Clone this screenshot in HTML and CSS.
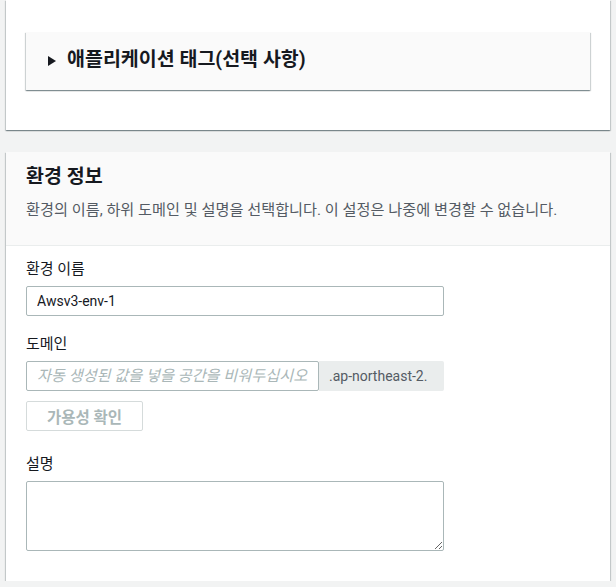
FILE: index.html
```html
<!DOCTYPE html>
<html lang="ko">
<head>
<meta charset="utf-8">
<title>환경 정보</title>
<link rel="stylesheet" href="styles.css">
</head>
<body>
<div class="page">
  <section class="card card-tags">
    <div class="expander">
      <svg class="caret" width="8" height="10" viewBox="0 0 8 10" aria-hidden="true"><polygon points="0,0 8,5 0,10" fill="#16191f"/></svg>
      <h3 class="expander-title">애플리케이션 태그(선택 사항)</h3>
    </div>
  </section>

  <section class="card">
    <header class="card-header">
      <h2 class="card-title">환경 정보</h2>
      <p class="card-desc">환경의 이름, 하위 도메인 및 설명을 선택합니다. 이 설정은 나중에 변경할 수 없습니다.</p>
    </header>
    <div class="card-body">
      <div class="field">
        <label class="field-label" for="env-name">환경 이름</label>
        <input class="text-input" id="env-name" type="text" value="Awsv3-env-1">
      </div>
      <div class="field">
        <label class="field-label" for="domain">도메인</label>
        <div class="input-group">
          <input class="text-input group-input" id="domain" type="text" placeholder="자동 생성된 값을 넣을 공간을 비워두십시오">
          <span class="suffix">.ap-northeast-2.</span>
        </div>
        <button class="btn" type="button" disabled>가용성 확인</button>
      </div>
      <div class="field field-desc">
        <label class="field-label" for="desc">설명</label>
        <textarea class="textarea" id="desc"></textarea>
      </div>
    </div>
  </section>
</div>
</body>
</html>
```

FILE: styles.css
```css
html, body {
  margin: 0;
  padding: 0;
  background: #f2f3f3;
}

body {
  font-family: "Roboto", "Noto Sans CJK KR", sans-serif;
  font-size: 15px;
  line-height: 22px;
  color: #16191f;
}

.page {
  padding: 0 6px;
}

.card {
  background: #ffffff;
  box-shadow: 0 1px 1px 0 rgba(0, 28, 36, 0.3),
              1px 1px 1px 0 rgba(0, 28, 36, 0.15),
              -1px 1px 1px 0 rgba(0, 28, 36, 0.15);
}

.card-tags {
  padding: 32px 20px 40px;
  margin-bottom: 22px;
}

.expander {
  display: flex;
  align-items: center;
  gap: 11px;
  background: #fafafa;
  padding: 17px 22px 19px;
  box-shadow: 0 1px 1px 0 rgba(0, 28, 36, 0.3),
              1px 1px 1px 0 rgba(0, 28, 36, 0.15),
              -1px 1px 1px 0 rgba(0, 28, 36, 0.15);
}

.caret {
  flex: none;
  display: block;
  margin-top: 2px;
}

.expander-title {
  margin: 0;
  font-size: 19.5px;
  line-height: 22px;
  font-weight: 700;
  color: #16191f;
}

.card-header {
  background: #fafafa;
  padding: 14px 20px 24px;
  border-bottom: 1px solid #eaeded;
}

.card-title {
  margin: 0;
  font-size: 19.5px;
  line-height: 22px;
  font-weight: 700;
  color: #16191f;
}

.card-desc {
  margin: 11px 0 0;
  font-size: 15.2px;
  line-height: 22px;
  color: #545b64;
}

.card-body {
  padding: 12px 20px 30px;
}

.field + .field {
  margin-top: 17px;
}

.field.field-desc {
  margin-top: 22px;
}

.field-label {
  display: block;
  margin-bottom: 6px;
  font-size: 15px;
  line-height: 22px;
  color: #16191f;
}

.text-input {
  box-sizing: border-box;
  display: block;
  width: 418px;
  height: 30px;
  margin: 0;
  padding: 0 10px;
  border: 1px solid #aab7b8;
  border-radius: 2px;
  background: #ffffff;
  font-family: "Roboto", "Noto Sans CJK KR", sans-serif;
  font-size: 14px;
  color: #16191f;
  outline: none;
}

.text-input::placeholder {
  color: #aab7b8;
  font-style: italic;
  font-size: 15.2px;
}

.input-group {
  display: flex;
  width: 418px;
  height: 30px;
}

.group-input {
  flex: 1;
  width: auto;
  min-width: 0;
}

.suffix {
  flex: none;
  box-sizing: border-box;
  width: 125px;
  padding: 0 10px;
  background: #eaeded;
  border-radius: 0 2px 2px 0;
  color: #545b64;
  font-size: 14px;
  line-height: 30px;
  white-space: nowrap;
  overflow: hidden;
}

.btn {
  box-sizing: border-box;
  display: block;
  margin-top: 10px;
  width: 117px;
  height: 30px;
  padding: 0;
  background: #ffffff;
  border: 1px solid #d5dbdb;
  border-radius: 2px;
  font-family: "Roboto", "Noto Sans CJK KR", sans-serif;
  font-size: 15.5px;
  font-weight: 700;
  color: #aab7b8;
}

.textarea {
  box-sizing: border-box;
  display: block;
  width: 418px;
  height: 70px;
  margin: 0;
  padding: 4px 10px;
  border: 1px solid #aab7b8;
  border-radius: 2px;
  background: #ffffff;
  font-family: "Roboto", "Noto Sans CJK KR", sans-serif;
  font-size: 14px;
  outline: none;
}
```
